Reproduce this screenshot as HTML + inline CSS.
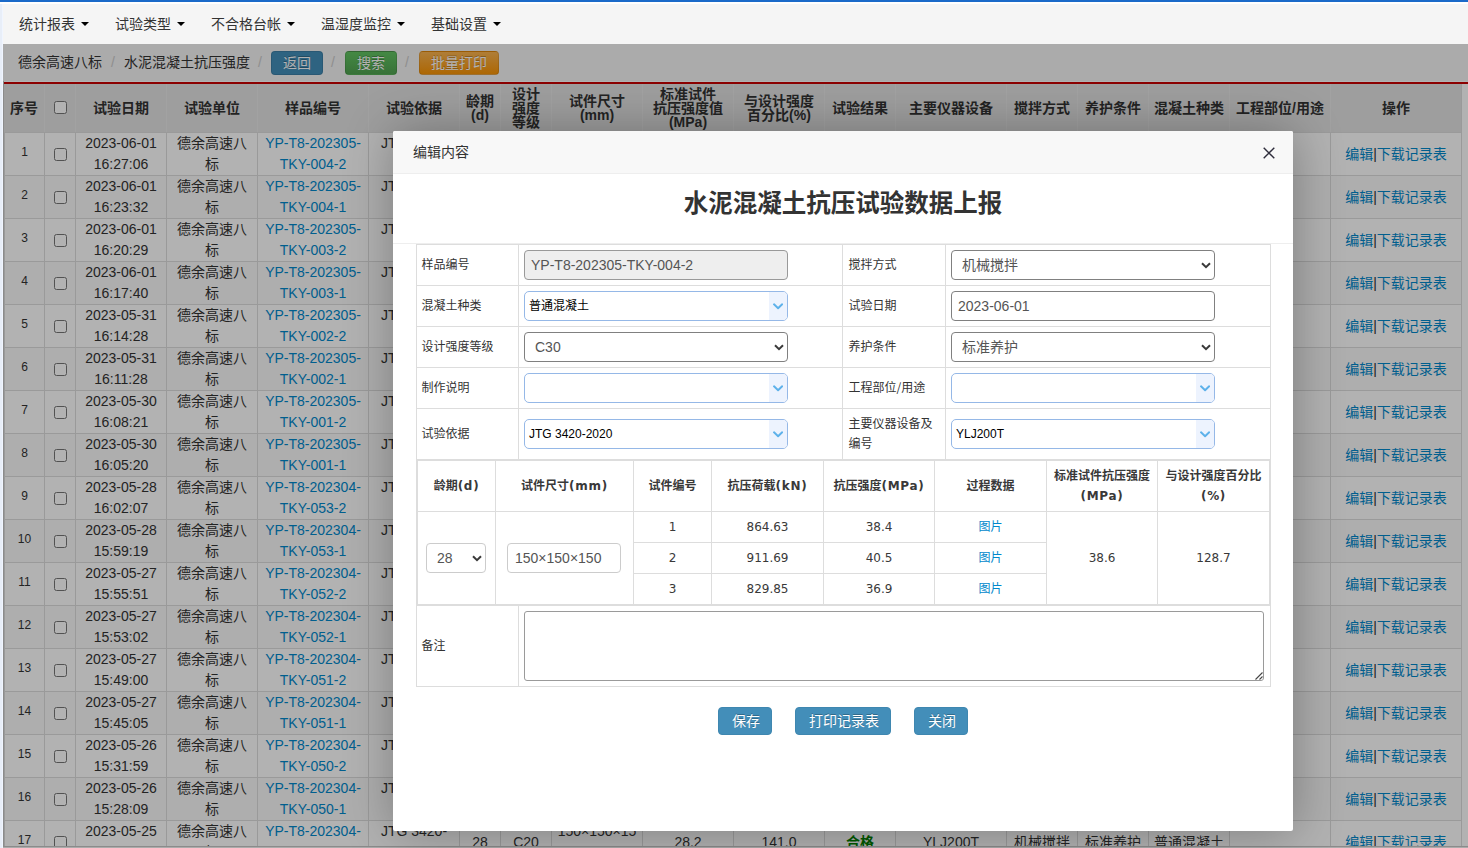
<!DOCTYPE html>
<html lang="zh-CN">
<head>
<meta charset="utf-8">
<title>水泥混凝土抗压强度</title>
<style>
*{box-sizing:border-box;}
html,body{margin:0;padding:0;}
body{width:1468px;height:848px;overflow:hidden;position:relative;background:#fff;
 font-family:"Liberation Sans","Noto Sans CJK SC",sans-serif;font-size:14px;line-height:21px;color:#333;}
a{color:#0088cc;text-decoration:none;}
#topline{position:absolute;left:0;top:0;width:1468px;height:2px;background:#1b6ac9;}
#strip{position:absolute;left:0;top:4px;width:3px;height:844px;background:#e8eef8;border-right:1px solid #f0f5ff;}
#nav{position:absolute;left:3px;top:4px;width:1465px;height:40px;background:#f5f5f5;}
#nav ul{list-style:none;margin:0;padding:0 0 0 2px;display:flex;}
#nav li{height:40px;line-height:40px;padding:0 12px 0 14px;color:#333;font-size:14px;white-space:nowrap;}
#nav li i{display:inline-block;width:0;height:0;border-left:4px solid transparent;border-right:4px solid transparent;border-top:4px solid #000;margin-left:6px;vertical-align:middle;position:relative;top:-1px;}
#frame{position:absolute;left:3px;top:44px;width:1465px;height:804px;overflow:hidden;background:#f5f5f5;}
#crumb{position:absolute;left:0;top:0;width:1465px;height:38px;background:#f5f5f5;}
#box{position:absolute;left:0;top:37px;width:1465px;height:766px;border-left:1px solid #c8c8c8;border-bottom:1px solid #c8c8c8;background:#fff;overflow:hidden;}
#red{position:absolute;left:0;top:1px;width:1464px;height:2px;background:#c70000;}
#crumb span{position:absolute;top:8px;line-height:21px;white-space:nowrap;}
#crumb .sep{color:#ccc;}
.btn{position:absolute;top:7px;height:24px;line-height:22px;border-radius:4px;color:#fff;text-align:center;font-size:14px;text-shadow:0 -1px 0 rgba(0,0,0,.25);border:1px solid rgba(0,0,0,.1);}
#grid{position:absolute;left:0;top:3px;border-collapse:separate;border-spacing:0;table-layout:fixed;width:1458px;border-right:1px solid #ddd;}
#grid th{height:48px;background:#e2e2e2;font-weight:bold;font-size:14px;line-height:14px;padding:0;text-align:center;vertical-align:middle;border-left:1px solid #e8e8e8;color:#333;}
#grid th:first-child{border-left:0;}
#grid td{height:43px;border-top:1px solid #ddd;border-left:1px solid #ddd;padding:0;text-align:center;vertical-align:middle;background:#fff;line-height:21px;font-size:14px;overflow:hidden;}
#grid td.no{font-size:12px;padding-bottom:3px;}
#grid tbody tr:nth-child(even) td{background:#f9f9f9;}
#grid td.ok{color:#008000;font-weight:bold;}
.ck{display:block;width:13px;height:13px;border:1px solid #767676;border-radius:2.5px;background:#fff;margin:15px 0 0 9px;}
#grid td.c,#grid th.c{vertical-align:top;}
#grid th .ck{margin-top:17px;}
#shade{position:absolute;left:0;top:0;width:1465px;height:804px;background:rgba(0,0,0,.3);}
#modal{position:absolute;left:390px;top:87px;width:900px;height:700px;background:#fff;box-shadow:1px 1px 50px rgba(0,0,0,.3);border-radius:2px;}
#mtitle{height:43px;line-height:42px;padding-left:20px;background:#f8f8f8;border-bottom:1px solid #eee;font-size:14px;color:#333;border-radius:2px 2px 0 0;}
#mclose{position:absolute;left:869px;top:15px;width:14px;height:14px;}
#mbody{position:absolute;left:0;top:43px;width:900px;height:657px;font-size:12px;color:#333;}
#mbody h2{position:absolute;left:0;top:15px;width:900px;margin:0;text-align:center;font-size:24.5px;line-height:30px;font-weight:bold;color:#333;}
#hr{position:absolute;left:0;top:69px;width:900px;height:1px;background:#eee;}

#ftab{position:absolute;left:23px;top:70px;width:855px;border-collapse:separate;border-spacing:0;table-layout:fixed;border-right:1px solid #ddd;border-bottom:1px solid #ddd;font-size:12px;line-height:20px;color:#333;}
#ftab>tbody>tr>td{border-left:1px solid #ddd;border-top:1px solid #ddd;padding:0 0 0 5px;vertical-align:middle;}
#ftab td.lb{padding-left:4.5px;}
#ftab td.lb2{padding-left:5.5px;}
#ftab tr.r41>td{height:41px;}
#ftab tr.r51>td{height:51px;}
#ftab tr.r81>td{height:81px;}
#ftab td.wrap{padding:0;height:145px;}
.ipt{width:264px;height:30px;border:1px solid #808080;border-radius:4px;background:#fff;font-size:14px;line-height:28px;color:#555;padding-left:6px;position:relative;white-space:nowrap;}
.ipt.dis{background:#eee;border-color:#999;}
.ipt.sel{padding-left:10px;}
.arr{position:absolute;right:3px;top:11px;width:10px;height:7px;}
.cmb{width:264px;height:30px;border:1px solid #95b8e7;border-radius:5px;background:#fff;font-size:12px;line-height:28px;color:#000;padding-left:4px;position:relative;white-space:nowrap;}
.cmb .ca{position:absolute;right:0;top:0;width:18px;height:28px;background:#edf3fe;border-radius:0 4px 4px 0;}
.cmb .ca svg{position:absolute;left:3.7px;top:10.9px;width:10.2px;height:7.14px;}
#itab{width:853px;border-collapse:separate;border-spacing:0;table-layout:fixed;border-right:1px solid #ddd;border-bottom:1px solid #ddd;font-family:"DejaVu Sans","Noto Sans CJK SC",sans-serif;font-size:12px;line-height:20px;color:#393939;}
#itab th,#itab td{border-left:1px solid #ddd;border-top:1px solid #ddd;padding:0;text-align:center;vertical-align:middle;}
#itab th{height:51px;font-weight:bold;}
#itab th span{letter-spacing:.7px;}
#itab tr.ir td{height:31px;}
#itab a{color:#0088cc;}
.ipt2{display:inline-block;height:30px;border:1px solid #ccc;border-radius:4px;background:#fff;font-family:"Liberation Sans","Noto Sans CJK SC",sans-serif;font-size:14px;line-height:28px;color:#555;padding-left:7px;text-align:left;position:relative;vertical-align:middle;white-space:nowrap;}
.ipt2.sel2{padding-left:10px;}
.ta{width:740px;height:70px;border:1px solid #9a9a9a;border-radius:3px;background:#fff;position:relative;}
.ta svg{position:absolute;right:0;bottom:0;width:8px;height:8px;}
.mbtn{position:absolute;top:533px;height:28px;line-height:26px;padding-left:2px;background:#438eb9;border:1px solid #3f87b0;border-radius:4px;color:#fff;font-size:14px;text-align:center;text-shadow:0 -1px 0 rgba(0,0,0,.25);}
</style>
</head>
<body>
<div id="topline"></div>
<div id="strip"></div>
<div id="nav"><ul><li>统计报表<i></i></li><li>试验类型<i></i></li><li>不合格台帐<i></i></li><li>温湿度监控<i></i></li><li>基础设置<i></i></li></ul></div>
<div id="frame">
 <div id="crumb">
  <span style="left:15px">德余高速八标</span><span class="sep" style="left:108px">/</span>
  <span style="left:121px">水泥混凝土抗压强度</span><span class="sep" style="left:255px">/</span>
  <div class="btn" style="left:268px;width:52px;background:#438eb9">返回</div><span class="sep" style="left:328px">/</span>
  <div class="btn" style="left:342px;width:52px;background:linear-gradient(#62c462,#51a351)">搜索</div><span class="sep" style="left:402px">/</span>
  <div class="btn" style="left:416px;width:80px;background:linear-gradient(#fbb450,#f89406)">批量打印</div>
 </div>
 <div id="box"><div id="red"></div>
 <table id="grid">
  <colgroup><col style="width:40px"><col style="width:31px"><col style="width:91px"><col style="width:91px"><col style="width:111px"><col style="width:91px"><col style="width:41px"><col style="width:51px"><col style="width:91px"><col style="width:91px"><col style="width:91px"><col style="width:71px"><col style="width:111px"><col style="width:71px"><col style="width:71px"><col style="width:81px"><col style="width:101px"><col style="width:131px"></colgroup>
  <thead><tr><th>序号</th><th class="c"><span class="ck"></span></th><th>试验日期</th><th>试验单位</th><th>样品编号</th><th>试验依据</th><th>龄期<br>(d)</th><th>设计<br>强度<br>等级</th><th>试件尺寸<br>(mm)</th><th>标准试件<br>抗压强度值<br>(MPa)</th><th>与设计强度<br>百分比(%)</th><th>试验结果</th><th>主要仪器设备</th><th>搅拌方式</th><th>养护条件</th><th>混凝土种类</th><th>工程部位/用途</th><th>操作</th></tr></thead>
  <tbody>
<tr><td class="no">1</td><td class="c"><span class="ck"></span></td><td>2023-06-01<br>16:27:06</td><td>德余高速八<br>标</td><td><a>YP-T8-202305-<br>TKY-004-2</a></td><td>JTG 3420-<br>2020</td><td>28</td><td>C30</td><td>150×150×15<br>0</td><td>38.6</td><td>128.7</td><td class="ok">合格</td><td>YLJ200T</td><td>机械搅拌</td><td>标准养护</td><td>普通混凝土</td><td></td><td><a>编辑</a>|<a>下载记录表</a></td></tr>
<tr><td class="no">2</td><td class="c"><span class="ck"></span></td><td>2023-06-01<br>16:23:32</td><td>德余高速八<br>标</td><td><a>YP-T8-202305-<br>TKY-004-1</a></td><td>JTG 3420-<br>2020</td><td>28</td><td>C30</td><td>150×150×15<br>0</td><td>39.1</td><td>130.3</td><td class="ok">合格</td><td>YLJ200T</td><td>机械搅拌</td><td>标准养护</td><td>普通混凝土</td><td></td><td><a>编辑</a>|<a>下载记录表</a></td></tr>
<tr><td class="no">3</td><td class="c"><span class="ck"></span></td><td>2023-06-01<br>16:20:29</td><td>德余高速八<br>标</td><td><a>YP-T8-202305-<br>TKY-003-2</a></td><td>JTG 3420-<br>2020</td><td>28</td><td>C30</td><td>150×150×15<br>0</td><td>37.8</td><td>126.0</td><td class="ok">合格</td><td>YLJ200T</td><td>机械搅拌</td><td>标准养护</td><td>普通混凝土</td><td></td><td><a>编辑</a>|<a>下载记录表</a></td></tr>
<tr><td class="no">4</td><td class="c"><span class="ck"></span></td><td>2023-06-01<br>16:17:40</td><td>德余高速八<br>标</td><td><a>YP-T8-202305-<br>TKY-003-1</a></td><td>JTG 3420-<br>2020</td><td>28</td><td>C30</td><td>150×150×15<br>0</td><td>38.2</td><td>127.3</td><td class="ok">合格</td><td>YLJ200T</td><td>机械搅拌</td><td>标准养护</td><td>普通混凝土</td><td></td><td><a>编辑</a>|<a>下载记录表</a></td></tr>
<tr><td class="no">5</td><td class="c"><span class="ck"></span></td><td>2023-05-31<br>16:14:28</td><td>德余高速八<br>标</td><td><a>YP-T8-202305-<br>TKY-002-2</a></td><td>JTG 3420-<br>2020</td><td>28</td><td>C30</td><td>150×150×15<br>0</td><td>36.9</td><td>123.0</td><td class="ok">合格</td><td>YLJ200T</td><td>机械搅拌</td><td>标准养护</td><td>普通混凝土</td><td></td><td><a>编辑</a>|<a>下载记录表</a></td></tr>
<tr><td class="no">6</td><td class="c"><span class="ck"></span></td><td>2023-05-31<br>16:11:28</td><td>德余高速八<br>标</td><td><a>YP-T8-202305-<br>TKY-002-1</a></td><td>JTG 3420-<br>2020</td><td>28</td><td>C30</td><td>150×150×15<br>0</td><td>37.5</td><td>125.0</td><td class="ok">合格</td><td>YLJ200T</td><td>机械搅拌</td><td>标准养护</td><td>普通混凝土</td><td></td><td><a>编辑</a>|<a>下载记录表</a></td></tr>
<tr><td class="no">7</td><td class="c"><span class="ck"></span></td><td>2023-05-30<br>16:08:21</td><td>德余高速八<br>标</td><td><a>YP-T8-202305-<br>TKY-001-2</a></td><td>JTG 3420-<br>2020</td><td>28</td><td>C30</td><td>150×150×15<br>0</td><td>38.0</td><td>126.7</td><td class="ok">合格</td><td>YLJ200T</td><td>机械搅拌</td><td>标准养护</td><td>普通混凝土</td><td></td><td><a>编辑</a>|<a>下载记录表</a></td></tr>
<tr><td class="no">8</td><td class="c"><span class="ck"></span></td><td>2023-05-30<br>16:05:20</td><td>德余高速八<br>标</td><td><a>YP-T8-202305-<br>TKY-001-1</a></td><td>JTG 3420-<br>2020</td><td>28</td><td>C30</td><td>150×150×15<br>0</td><td>37.2</td><td>124.0</td><td class="ok">合格</td><td>YLJ200T</td><td>机械搅拌</td><td>标准养护</td><td>普通混凝土</td><td></td><td><a>编辑</a>|<a>下载记录表</a></td></tr>
<tr><td class="no">9</td><td class="c"><span class="ck"></span></td><td>2023-05-28<br>16:02:07</td><td>德余高速八<br>标</td><td><a>YP-T8-202304-<br>TKY-053-2</a></td><td>JTG 3420-<br>2020</td><td>28</td><td>C25</td><td>150×150×15<br>0</td><td>33.4</td><td>133.6</td><td class="ok">合格</td><td>YLJ200T</td><td>机械搅拌</td><td>标准养护</td><td>普通混凝土</td><td></td><td><a>编辑</a>|<a>下载记录表</a></td></tr>
<tr><td class="no">10</td><td class="c"><span class="ck"></span></td><td>2023-05-28<br>15:59:19</td><td>德余高速八<br>标</td><td><a>YP-T8-202304-<br>TKY-053-1</a></td><td>JTG 3420-<br>2020</td><td>28</td><td>C25</td><td>150×150×15<br>0</td><td>32.8</td><td>131.2</td><td class="ok">合格</td><td>YLJ200T</td><td>机械搅拌</td><td>标准养护</td><td>普通混凝土</td><td></td><td><a>编辑</a>|<a>下载记录表</a></td></tr>
<tr><td class="no">11</td><td class="c"><span class="ck"></span></td><td>2023-05-27<br>15:55:51</td><td>德余高速八<br>标</td><td><a>YP-T8-202304-<br>TKY-052-2</a></td><td>JTG 3420-<br>2020</td><td>28</td><td>C25</td><td>150×150×15<br>0</td><td>33.0</td><td>132.0</td><td class="ok">合格</td><td>YLJ200T</td><td>机械搅拌</td><td>标准养护</td><td>普通混凝土</td><td></td><td><a>编辑</a>|<a>下载记录表</a></td></tr>
<tr><td class="no">12</td><td class="c"><span class="ck"></span></td><td>2023-05-27<br>15:53:02</td><td>德余高速八<br>标</td><td><a>YP-T8-202304-<br>TKY-052-1</a></td><td>JTG 3420-<br>2020</td><td>28</td><td>C25</td><td>150×150×15<br>0</td><td>32.5</td><td>130.0</td><td class="ok">合格</td><td>YLJ200T</td><td>机械搅拌</td><td>标准养护</td><td>普通混凝土</td><td></td><td><a>编辑</a>|<a>下载记录表</a></td></tr>
<tr><td class="no">13</td><td class="c"><span class="ck"></span></td><td>2023-05-27<br>15:49:00</td><td>德余高速八<br>标</td><td><a>YP-T8-202304-<br>TKY-051-2</a></td><td>JTG 3420-<br>2020</td><td>28</td><td>C20</td><td>150×150×15<br>0</td><td>27.9</td><td>139.5</td><td class="ok">合格</td><td>YLJ200T</td><td>机械搅拌</td><td>标准养护</td><td>普通混凝土</td><td></td><td><a>编辑</a>|<a>下载记录表</a></td></tr>
<tr><td class="no">14</td><td class="c"><span class="ck"></span></td><td>2023-05-27<br>15:45:05</td><td>德余高速八<br>标</td><td><a>YP-T8-202304-<br>TKY-051-1</a></td><td>JTG 3420-<br>2020</td><td>28</td><td>C20</td><td>150×150×15<br>0</td><td>28.4</td><td>142.0</td><td class="ok">合格</td><td>YLJ200T</td><td>机械搅拌</td><td>标准养护</td><td>普通混凝土</td><td></td><td><a>编辑</a>|<a>下载记录表</a></td></tr>
<tr><td class="no">15</td><td class="c"><span class="ck"></span></td><td>2023-05-26<br>15:31:59</td><td>德余高速八<br>标</td><td><a>YP-T8-202304-<br>TKY-050-2</a></td><td>JTG 3420-<br>2020</td><td>28</td><td>C20</td><td>150×150×15<br>0</td><td>27.6</td><td>138.0</td><td class="ok">合格</td><td>YLJ200T</td><td>机械搅拌</td><td>标准养护</td><td>普通混凝土</td><td></td><td><a>编辑</a>|<a>下载记录表</a></td></tr>
<tr><td class="no">16</td><td class="c"><span class="ck"></span></td><td>2023-05-26<br>15:28:09</td><td>德余高速八<br>标</td><td><a>YP-T8-202304-<br>TKY-050-1</a></td><td>JTG 3420-<br>2020</td><td>28</td><td>C20</td><td>150×150×15<br>0</td><td>28.0</td><td>140.0</td><td class="ok">合格</td><td>YLJ200T</td><td>机械搅拌</td><td>标准养护</td><td>普通混凝土</td><td></td><td><a>编辑</a>|<a>下载记录表</a></td></tr>
<tr><td class="no">17</td><td class="c"><span class="ck"></span></td><td>2023-05-25<br>15:24:33</td><td>德余高速八<br>标</td><td><a>YP-T8-202304-<br>TKY-049-2</a></td><td>JTG 3420-<br>2020</td><td>28</td><td>C20</td><td>150×150×15<br>0</td><td>28.2</td><td>141.0</td><td class="ok">合格</td><td>YLJ200T</td><td>机械搅拌</td><td>标准养护</td><td>普通混凝土</td><td></td><td><a>编辑</a>|<a>下载记录表</a></td></tr>
  </tbody>
 </table>
 </div>
 <div id="shade"></div>
 <div id="modal">
  <div id="mtitle">编辑内容</div>
  <svg id="mclose" viewBox="0 0 14 14"><path d="M1.7 1.7 L12.3 12.3 M12.3 1.7 L1.7 12.3" stroke="#2e2d3c" stroke-width="1.4" fill="none"/></svg>
  <div id="mbody">
   <h2>水泥混凝土抗压试验数据上报</h2>
   <div id="hr"></div>
   <table id="ftab">
    <colgroup><col style="width:102px"><col style="width:324px"><col style="width:103px"><col style="width:325px"></colgroup>
    <tr class="r41"><td class="lb">样品编号</td><td><div class="ipt dis">YP-T8-202305-TKY-004-2</div></td><td class="lb lb2">搅拌方式</td><td><div class="ipt sel">机械搅拌<svg class="arr" viewBox="0 0 10 7"><path d="M1 1.2 L5 5.2 L9 1.2" fill="none" stroke="#3a3a3a" stroke-width="2"/></svg></div></td></tr>
    <tr class="r41"><td class="lb">混凝土种类</td><td><div class="cmb">普通混凝土<span class="ca"><svg viewBox="0 0 10 7"><path d="M1 1.3 L5 5.1 L9 1.3" fill="none" stroke="#5db1ea" stroke-width="1.9" stroke-linecap="round" stroke-linejoin="round"/></svg></span></div></td><td class="lb lb2">试验日期</td><td><div class="ipt">2023-06-01</div></td></tr>
    <tr class="r41"><td class="lb">设计强度等级</td><td><div class="ipt sel">C30<svg class="arr" viewBox="0 0 10 7"><path d="M1 1.2 L5 5.2 L9 1.2" fill="none" stroke="#3a3a3a" stroke-width="2"/></svg></div></td><td class="lb lb2">养护条件</td><td><div class="ipt sel">标准养护<svg class="arr" viewBox="0 0 10 7"><path d="M1 1.2 L5 5.2 L9 1.2" fill="none" stroke="#3a3a3a" stroke-width="2"/></svg></div></td></tr>
    <tr class="r41"><td class="lb">制作说明</td><td><div class="cmb"><span class="ca"><svg viewBox="0 0 10 7"><path d="M1 1.3 L5 5.1 L9 1.3" fill="none" stroke="#5db1ea" stroke-width="1.9" stroke-linecap="round" stroke-linejoin="round"/></svg></span></div></td><td class="lb lb2">工程部位<span style="font-family:'Noto Sans CJK SC',sans-serif;line-height:0">/</span>用途</td><td><div class="cmb"><span class="ca"><svg viewBox="0 0 10 7"><path d="M1 1.3 L5 5.1 L9 1.3" fill="none" stroke="#5db1ea" stroke-width="1.9" stroke-linecap="round" stroke-linejoin="round"/></svg></span></div></td></tr>
    <tr class="r51"><td class="lb">试验依据</td><td><div class="cmb">JTG 3420-2020<span class="ca"><svg viewBox="0 0 10 7"><path d="M1 1.3 L5 5.1 L9 1.3" fill="none" stroke="#5db1ea" stroke-width="1.9" stroke-linecap="round" stroke-linejoin="round"/></svg></span></div></td><td class="lb lb2">主要仪器设备及<br>编号</td><td><div class="cmb">YLJ200T<span class="ca"><svg viewBox="0 0 10 7"><path d="M1 1.3 L5 5.1 L9 1.3" fill="none" stroke="#5db1ea" stroke-width="1.9" stroke-linecap="round" stroke-linejoin="round"/></svg></span></div></td></tr>
    <tr><td colspan="4" class="wrap">
     <table id="itab">
      <colgroup><col style="width:78px"><col style="width:138px"><col style="width:78px"><col style="width:112px"><col style="width:111px"><col style="width:112px"><col style="width:111px"><col style="width:112px"></colgroup>
      <tr class="ih"><th>龄期<span>(d)</span></th><th>试件尺寸<span>(mm)</span></th><th>试件编号</th><th>抗压荷载<span>(kN)</span></th><th>抗压强度<span>(MPa)</span></th><th>过程数据</th><th>标准试件抗压强度<br><span>(MPa)</span></th><th>与设计强度百分比<br><span>(%)</span></th></tr>
      <tr class="ir"><td rowspan="3" style="text-align:left"><div class="ipt2 sel2" style="width:60px;margin-left:8px">28<svg class="arr" viewBox="0 0 10 7"><path d="M1 1.2 L5 5.2 L9 1.2" fill="none" stroke="#3a3a3a" stroke-width="2"/></svg></div></td><td rowspan="3" style="text-align:left"><div class="ipt2" style="width:114px;margin-left:11px">150×150×150</div></td><td>1</td><td>864.63</td><td>38.4</td><td><a>图片</a></td><td rowspan="3">38.6</td><td rowspan="3">128.7</td></tr>
      <tr class="ir"><td>2</td><td>911.69</td><td>40.5</td><td><a>图片</a></td></tr>
      <tr class="ir"><td>3</td><td>829.85</td><td>36.9</td><td><a>图片</a></td></tr>
     </table>
    </td></tr>
    <tr class="r81"><td class="lb">备注</td><td colspan="3"><div class="ta"><svg viewBox="0 0 8 8"><path d="M7.5 0.5 L0.5 7.5 M7.5 4.5 L4.5 7.5" stroke="#444" stroke-width="1.1" fill="none"/></svg></div></td></tr>
   </table>
   <div class="mbtn" style="left:325px;width:54px">保存</div>
   <div class="mbtn" style="left:402px;width:96px">打印记录表</div>
   <div class="mbtn" style="left:521px;width:54px">关闭</div>

  </div>
 </div>
</div>
</body>
</html>
